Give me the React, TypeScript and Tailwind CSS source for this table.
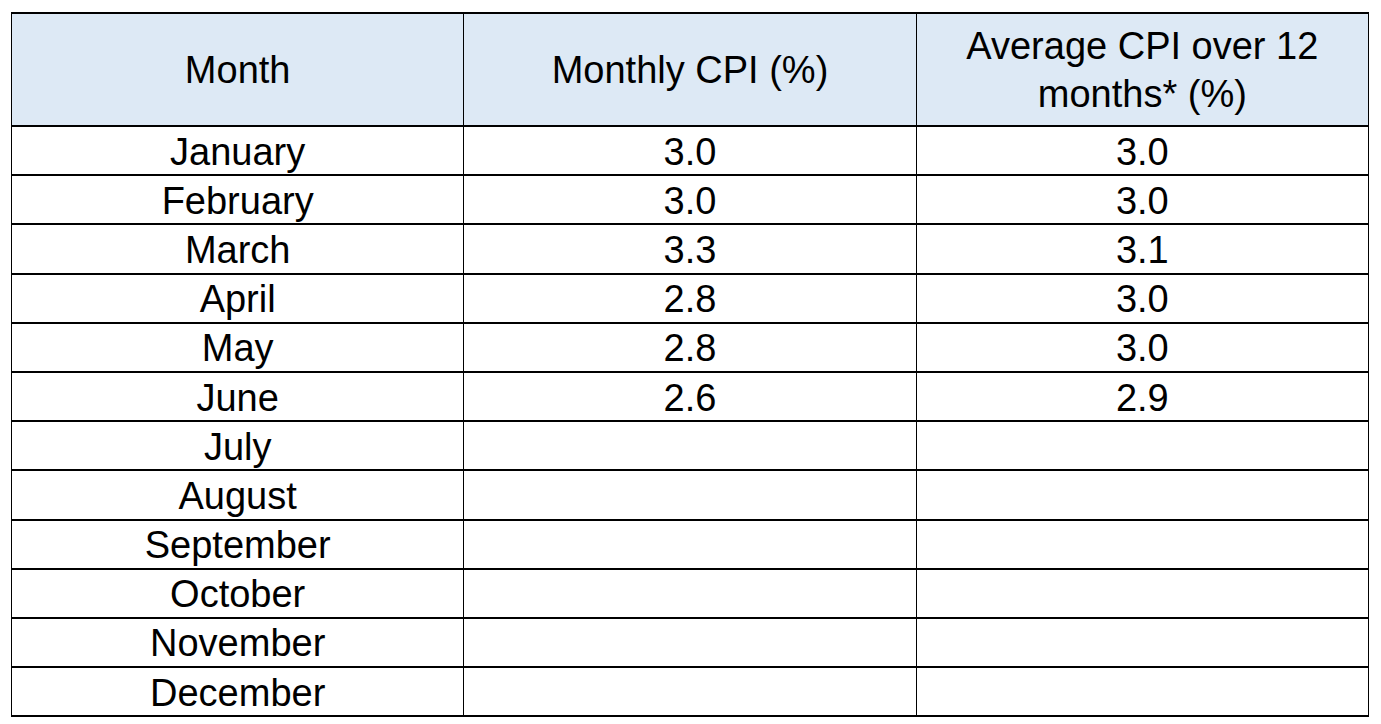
const rows: [string, string, string][] = [
  ['January', '3.0', '3.0'],
  ['February', '3.0', '3.0'],
  ['March', '3.3', '3.1'],
  ['April', '2.8', '3.0'],
  ['May', '2.8', '3.0'],
  ['June', '2.6', '2.9'],
  ['July', '', ''],
  ['August', '', ''],
  ['September', '', ''],
  ['October', '', ''],
  ['November', '', ''],
  ['December', '', ''],
];

export default function App() {
  return (
    <div className="min-h-screen bg-white pl-[11px] pt-[12px]" style={{ fontFamily: '"Liberation Sans", Arial, sans-serif' }}>
      <table className="w-[1358px] table-fixed border-collapse text-[38px] leading-[1.24] text-black">
        <thead>
          <tr className="h-[113px] bg-[#dde9f5]">
            <th className="w-1/3 border-x border-y-2 border-black px-4 pt-[2px] font-normal">Month</th>
            <th className="w-1/3 border-x border-y-2 border-black px-4 pt-[2px] font-normal">Monthly CPI (%)</th>
            <th className="w-1/3 border-x border-y-2 border-black px-10 pt-[2px] font-normal">Average CPI over 12 months* (%)</th>
          </tr>
        </thead>
        <tbody>
          {rows.map(([m, a, b]) => (
            <tr key={m} className="h-[49.2px]">
              <td className="border-x border-y-2 border-black p-0 pt-[2px] text-center leading-none">{m}</td>
              <td className="border-x border-y-2 border-black p-0 pt-[2px] text-center leading-none">{a}</td>
              <td className="border-x border-y-2 border-black p-0 pt-[2px] text-center leading-none">{b}</td>
            </tr>
          ))}
        </tbody>
      </table>
    </div>
  );
}
